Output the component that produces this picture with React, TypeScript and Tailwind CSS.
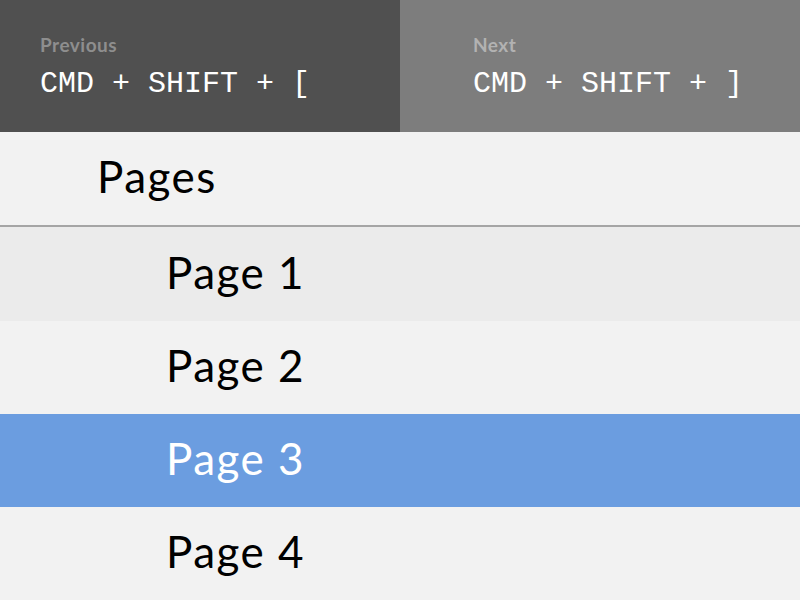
export default function App() {
  const pages = ["Page 1", "Page 2", "Page 3", "Page 4"];
  return (
    <div className="w-[800px] h-[600px] overflow-hidden bg-[#f2f2f2] font-['Lato',sans-serif]">
      <div className="flex h-[132px]">
        <div className="w-1/2 bg-[#505050] pl-10 pt-[33px]">
          <div className="text-[19px] font-bold tracking-[0.5px] text-[#8e8e8e] leading-6">Previous</div>
          <div className="mt-[9px] text-[30px] leading-9 text-white font-['Liberation_Mono',monospace]">CMD + SHIFT + [</div>
        </div>
        <div className="w-1/2 bg-[#7d7d7d] pl-[73px] pt-[33px]">
          <div className="text-[19px] font-bold tracking-[0.5px] text-[#b2b2b2] leading-6">Next</div>
          <div className="mt-[9px] text-[30px] leading-9 text-white font-['Liberation_Mono',monospace]">CMD + SHIFT + ]</div>
        </div>
      </div>
      <div className="h-[95px] flex items-center pl-[97px] pb-[6px] border-b-2 border-[#a5a5a5] text-[44px] tracking-[1.5px] text-black">
        Pages
      </div>
      {pages.map((p, i) => (
        <div
          key={p}
          className={
            "flex items-center pl-[166px] pb-[5px] text-[44px] tracking-[1.5px] " +
            (i === 0 ? "h-[94px] " : "h-[93px] ") +
            (i === 0 ? "bg-[#ebebeb] text-black" : i === 2 ? "bg-[#6b9de0] text-white" : "bg-[#f2f2f2] text-black")
          }
        >
          {p}
        </div>
      ))}
    </div>
  );
}
